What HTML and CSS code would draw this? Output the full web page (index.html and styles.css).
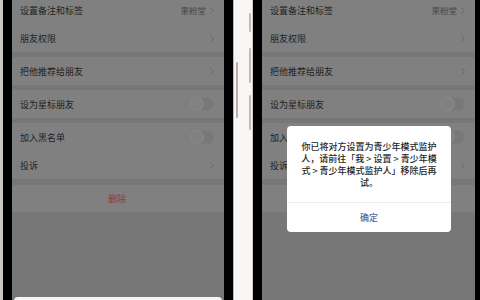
FILE: index.html
```html
<!DOCTYPE html>
<html lang="zh-CN">
<head>
<meta charset="utf-8">
<link rel="stylesheet" href="styles.css">
</head>
<body>
<div class="stage">
  <div class="edge-l"></div>

  <div class="phone p1">
    <div class="screen">
      <div class="list">
        <div class="group">
          <div class="row"><span class="label">设置备注和标签</span><span class="value">果粉堂</span><svg class="chev" viewBox="0 0 4 7"><polyline points="0.5,0.5 3.5,3.5 0.5,6.5"/></svg></div>
          <div class="row"><span class="label">朋友权限</span><svg class="chev" viewBox="0 0 4 7"><polyline points="0.5,0.5 3.5,3.5 0.5,6.5"/></svg></div>
        </div>
        <div class="group">
          <div class="row"><span class="label">把他推荐给朋友</span><svg class="chev" viewBox="0 0 4 7"><polyline points="0.5,0.5 3.5,3.5 0.5,6.5"/></svg></div>
        </div>
        <div class="group">
          <div class="row"><span class="label">设为星标朋友</span><span class="switch"><span class="knob"></span></span></div>
        </div>
        <div class="group">
          <div class="row"><span class="label">加入黑名单</span><span class="switch"><span class="knob"></span></span></div>
          <div class="row"><span class="label">投诉</span><svg class="chev" viewBox="0 0 4 7"><polyline points="0.5,0.5 3.5,3.5 0.5,6.5"/></svg></div>
        </div>
        <div class="group">
          <div class="row danger">删除</div>
        </div>
      </div>
      <div class="sheet"></div>
    </div>
  </div>

  <div class="frame-gap">
    <span class="btn power"></span>
    <span class="btn mute"></span>
    <span class="btn vol-up"></span>
    <span class="btn vol-down"></span>
  </div>

  <div class="phone p2">
    <div class="screen">
      <div class="list">
        <div class="group">
          <div class="row"><span class="label">设置备注和标签</span><span class="value">果粉堂</span><svg class="chev" viewBox="0 0 4 7"><polyline points="0.5,0.5 3.5,3.5 0.5,6.5"/></svg></div>
          <div class="row"><span class="label">朋友权限</span><svg class="chev" viewBox="0 0 4 7"><polyline points="0.5,0.5 3.5,3.5 0.5,6.5"/></svg></div>
        </div>
        <div class="group">
          <div class="row"><span class="label">把他推荐给朋友</span><svg class="chev" viewBox="0 0 4 7"><polyline points="0.5,0.5 3.5,3.5 0.5,6.5"/></svg></div>
        </div>
        <div class="group">
          <div class="row"><span class="label">设为星标朋友</span><span class="switch"><span class="knob"></span></span></div>
        </div>
        <div class="group">
          <div class="row"><span class="label">加入黑名单</span><span class="switch"><span class="knob"></span></span></div>
          <div class="row"><span class="label">投诉</span><svg class="chev" viewBox="0 0 4 7"><polyline points="0.5,0.5 3.5,3.5 0.5,6.5"/></svg></div>
        </div>
        <div class="group">
          <div class="row danger">删除</div>
        </div>
      </div>
      <div class="dialog">
        <div class="msg">你已将对方设置为青少年模式监护<br>人，请前往「我 &gt; 设置 &gt; 青少年模<br>式 &gt; 青少年模式监护人」移除后再<br>试。</div>
        <div class="ok">确定</div>
      </div>
    </div>
  </div>

  <div class="edge-r"></div>
</div>
</body>
</html>
```

FILE: styles.css
```css
* { box-sizing: border-box; }
html, body { margin: 0; padding: 0; }
body {
  width: 480px;
  height: 300px;
  overflow: hidden;
  background: #777;
  font-family: "Noto Sans CJK SC", "Noto Sans", sans-serif;
}
.stage {
  display: flex;
  width: 480px;
  height: 300px;
}
.edge-l {
  width: 3px;
  background: #cbc6c0;
}
.edge-r {
  width: 5px;
  background: #000;
}
.phone {
  display: flex;
  height: 300px;
  background: #000;
}
.p1 { width: 230px; padding: 0 9px; }
.p2 { width: 222px; padding-left: 9px; }
.screen {
  position: relative;
  flex: 1;
  height: 300px;
  overflow: hidden;
  background: #777;
  display: flex;
  flex-direction: column;
}
.list {
  margin-top: -4px;
}
.group {
  background: #808080;
  margin-bottom: 5px;
}
.group:nth-child(4) { margin-bottom: 6px; }
.row {
  height: 28px;
  display: flex;
  align-items: center;
  padding: 0 10px 0 8px;
  font-size: 9px;
  color: #222;
}
.label { flex: 1; }
.value {
  color: #474747;
  margin-right: 4px;
  font-size: 8.5px;
}
.chev {
  width: 4px;
  height: 7px;
  fill: none;
  stroke: #5f5f5f;
  stroke-width: 0.8;
}
.switch {
  width: 24px;
  height: 14px;
  border-radius: 7px;
  background: #787878;
  border: 1px solid #7c7c7c;
  display: flex;
  align-items: center;
}
.knob {
  width: 14px;
  height: 14px;
  margin-left: -1px;
  border-radius: 50%;
  background: #818181;
  border: 1px solid #8b8b8b;
}
.row.danger {
  height: 27px;
  justify-content: center;
  color: #8e3b3b;
}
.sheet {
  position: absolute;
  left: 2px;
  right: 2px;
  bottom: -10px;
  height: 13px;
  background: #f5f5f5;
  border-radius: 4px;
}
.frame-gap {
  position: relative;
  width: 20px;
  background: #f7f6f4;
  border-left: 1px solid #bdb7b2;
  border-right: 1px solid #cfcbc7;
}
.btn {
  position: absolute;
  width: 2px;
  border-radius: 1px;
}
.power { left: 2px; top: 62px; height: 56px; background: #b9adaa; }
.mute { left: 15px; top: 13px; height: 19px; background: #bfbdbb; }
.vol-up { left: 15px; top: 48px; height: 35px; background: #bfbdbb; }
.vol-down { left: 15px; top: 95px; height: 35px; background: #bfbdbb; }
.dialog {
  position: absolute;
  left: 25px;
  top: 126px;
  width: 164px;
  height: 106px;
  background: #fff;
  border-radius: 4px;
  display: flex;
  flex-direction: column;
}
.msg {
  flex: 1;
  padding: 15px 8px 0;
  text-align: center;
  font-size: 9px;
  line-height: 12px;
  font-weight: 500;
  color: #1e1e1e;
  border-bottom: 1px solid #ececec;
}
.ok {
  height: 29px;
  display: flex;
  align-items: center;
  justify-content: center;
  font-size: 9px;
  color: #576b95;
  font-weight: 500;
}
```
